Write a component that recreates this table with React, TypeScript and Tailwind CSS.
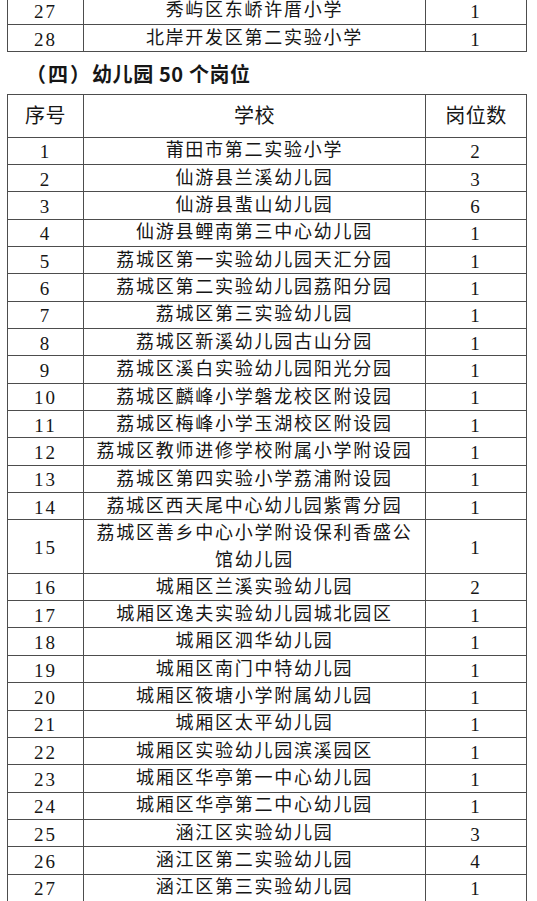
import React from "react";

type Row = { no: string; school: string; count: string; tall?: boolean };

const prevRows: Row[] = [
  { no: "27", school: "秀屿区东峤许厝小学", count: "1" },
  { no: "28", school: "北岸开发区第二实验小学", count: "1" },
];

const kgRows: Row[] = [
  { no: "1", school: "莆田市第二实验小学", count: "2" },
  { no: "2", school: "仙游县兰溪幼儿园", count: "3" },
  { no: "3", school: "仙游县蜚山幼儿园", count: "6" },
  { no: "4", school: "仙游县鲤南第三中心幼儿园", count: "1" },
  { no: "5", school: "荔城区第一实验幼儿园天汇分园", count: "1" },
  { no: "6", school: "荔城区第二实验幼儿园荔阳分园", count: "1" },
  { no: "7", school: "荔城区第三实验幼儿园", count: "1" },
  { no: "8", school: "荔城区新溪幼儿园古山分园", count: "1" },
  { no: "9", school: "荔城区溪白实验幼儿园阳光分园", count: "1" },
  { no: "10", school: "荔城区麟峰小学磐龙校区附设园", count: "1" },
  { no: "11", school: "荔城区梅峰小学玉湖校区附设园", count: "1" },
  { no: "12", school: "荔城区教师进修学校附属小学附设园", count: "1" },
  { no: "13", school: "荔城区第四实验小学荔浦附设园", count: "1" },
  { no: "14", school: "荔城区西天尾中心幼儿园紫霄分园", count: "1" },
  { no: "15", school: "荔城区善乡中心小学附设保利香盛公馆幼儿园", count: "1", tall: true },
  { no: "16", school: "城厢区兰溪实验幼儿园", count: "2" },
  { no: "17", school: "城厢区逸夫实验幼儿园城北园区", count: "1" },
  { no: "18", school: "城厢区泗华幼儿园", count: "1" },
  { no: "19", school: "城厢区南门中特幼儿园", count: "1" },
  { no: "20", school: "城厢区筱塘小学附属幼儿园", count: "1" },
  { no: "21", school: "城厢区太平幼儿园", count: "1" },
  { no: "22", school: "城厢区实验幼儿园滨溪园区", count: "1" },
  { no: "23", school: "城厢区华亭第一中心幼儿园", count: "1" },
  { no: "24", school: "城厢区华亭第二中心幼儿园", count: "1" },
  { no: "25", school: "涵江区实验幼儿园", count: "3" },
  { no: "26", school: "涵江区第二实验幼儿园", count: "4" },
  { no: "27", school: "涵江区第三实验幼儿园", count: "1" },
];

function TableRow({ row, first }: { row: Row; first?: boolean }) {
  return (
    <div
      className={
        "flex border-b border-[#4d4d4d] " +
        (row.tall ? "h-[53.4px]" : "h-[27.35px]") +
        (first ? " -mt-[2.4px]" : "")
      }
    >
      <div className="flex w-[76px] items-center justify-center border-r border-[#4d4d4d] pt-[2px] text-[19px] leading-none tracking-[2px]">
        {row.no}
      </div>
      <div className="flex w-[342px] items-center justify-center border-r border-[#4d4d4d] px-[12px] text-center text-[18px] leading-[26.7px] tracking-[1.75px]">
        {row.school}
      </div>
      <div className="flex flex-1 items-center justify-center pt-[2px] text-[19px] leading-none tracking-[2px]">
        {row.count}
      </div>
    </div>
  );
}

export default function App() {
  return (
    <div
      className="h-[901px] w-[537px] overflow-hidden bg-white text-[#161616]"
      style={{ fontFamily: '"Liberation Serif", "Noto Sans CJK SC", serif' }}
    >
      {/* tail of the previous table */}
      <div className="ml-[7px] w-[520px] border-x border-[#4d4d4d]">
        {prevRows.map((r, i) => (
          <TableRow key={r.no} row={r} first={i === 0} />
        ))}
      </div>

      {/* section heading */}
      <div
        className="flex h-[42px] items-center pl-[26px] pt-[2px] text-[20px] font-bold"
        style={{ fontFamily: '"Noto Sans CJK SC", sans-serif' }}
      >
        <span className="tracking-[2px]">（四）</span>
        <span className="tracking-[0.6px]">幼儿园 50 个岗位</span>
      </div>

      {/* kindergarten table */}
      <div className="ml-[7px] w-[520px] border-x border-t border-[#4d4d4d]">
        <div className="flex h-[42.3px] border-b border-[#4d4d4d] text-[20px] tracking-[0.5px]">
          <div className="flex w-[76px] items-center justify-center border-r border-[#4d4d4d]">序号</div>
          <div className="flex w-[342px] items-center justify-center border-r border-[#4d4d4d]">学校</div>
          <div className="flex flex-1 items-center justify-center">岗位数</div>
        </div>
        {kgRows.map((r) => (
          <TableRow key={r.no} row={r} />
        ))}
      </div>
    </div>
  );
}
